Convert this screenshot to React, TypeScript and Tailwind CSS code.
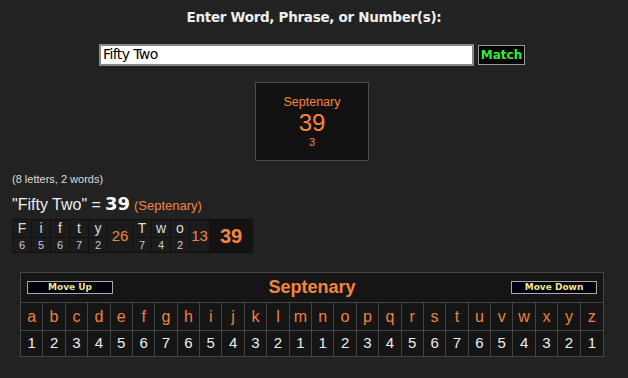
import React from "react";

const letters = "abcdefghijklmnopqrstuvwxyz".split("");
const vals = [1,2,3,4,5,6,7,6,5,4,3,2,1,1,2,3,4,5,6,7,6,5,4,3,2,1];

const word1 = [["F","6"],["i","5"],["f","6"],["t","7"],["y","2"]];
const word2 = [["T","7"],["w","4"],["o","2"]];

export default function App() {
  return (
    <div className="w-[628px] h-[378px] bg-[#222222] overflow-hidden text-white" style={{ fontFamily: '"Liberation Sans", Arial, sans-serif' }}>
      <div className="pt-[9px] h-[44px] text-center font-bold text-[#eeeeee]" style={{ fontFamily: '"DejaVu Sans", Tahoma, sans-serif', fontSize: "13.5px", lineHeight: "16px", letterSpacing: "-0.3px" }}>
        Enter Word, Phrase, or Number(s):
      </div>
      <div className="flex items-center pl-[99px] gap-[4px] h-[21px]">
        <div className="w-[375px] h-[22px] bg-white border-2 border-[#888] flex items-center pl-[2px] text-black" style={{ fontFamily: '"DejaVu Sans", Tahoma, sans-serif', fontSize: "14px", letterSpacing: "-0.6px" }}>
          Fifty Two
        </div>
        <div className="w-[47px] h-[20px] bg-black border border-[#999] flex items-center justify-center text-[#33ee33] font-bold text-[12px]" style={{ fontFamily: '"DejaVu Sans", Tahoma, sans-serif' }}>
          Match
        </div>
      </div>
      <div className="mt-[17px] ml-[255px] w-[114px] h-[79px] bg-[#111111] border border-[#4a4a4a] flex flex-col items-center text-[#f5853f]">
        <div className="mt-[12px] text-[12.5px] leading-[14px]">Septenary</div>
        <div className="mt-[2px] text-[24px] leading-[24px]">39</div>
        <div className="mt-[1px] text-[11px] leading-[12px]">3</div>
      </div>
      <div className="mt-[12px] pl-[12px] text-[11px] leading-[13px] text-[#dddddd]">(8 letters, 2 words)</div>
      <div className="mt-[4px] pl-[12px] flex items-baseline h-[20px]">
        <span className="text-[16px] text-[#eeeeee]">"Fifty Two" = </span>
        <span className="ml-[4px] text-[18px] font-bold text-white" style={{ fontFamily: '"DejaVu Sans", Verdana, sans-serif' }}>39</span>
        <span className="ml-[4px] text-[13px] text-[#f5853f]">(Septenary)</span>
      </div>
      <div className="mt-[9px] ml-[12px] flex w-fit border border-[#111] bg-[#111] gap-px">
        {[word1, word2].map((w, wi) => (
          <React.Fragment key={wi}>
            {w.map(([l, n], i) => (
              <div key={i} className="w-[18px] flex flex-col gap-px">
                <div className="h-[17px] bg-[#1c1c1c] flex items-center justify-center text-[14px] text-[#dddddd]">{l}</div>
                <div className="h-[14px] bg-[#1c1c1c] flex items-center justify-center text-[11px] text-[#cccccc]">{n}</div>
              </div>
            ))}
            <div className={`${wi === 0 ? "w-[24px]" : "w-[19px]"} bg-[#1c1c1c] flex items-center justify-center text-[15px] text-[#f5853f]`}>{wi === 0 ? "26" : "13"}</div>
          </React.Fragment>
        ))}
        <div className="w-[42px] bg-[#131313] flex items-center justify-center text-[20px] font-bold text-[#f5853f]">39</div>
      </div>
      <div className="mt-[19px] ml-[20px] w-[584px] border border-[#444] bg-[#151515]">
        <div className="h-[30px] flex items-center justify-between px-[6px] border-b border-[#444] relative">
          <div className="w-[86px] h-[13px] bg-[#000010] border border-[#aaa] flex items-center justify-center text-[9px] font-bold text-[#f0e68c]" style={{ fontFamily: '"DejaVu Sans", Tahoma, sans-serif' }}>Move Up</div>
          <div className="text-[17px] font-bold text-[#f5853f]" style={{ fontFamily: '"Liberation Sans", Arial, sans-serif', fontSize: "18px" }}>Septenary</div>
          <div className="w-[86px] h-[13px] bg-[#000010] border border-[#aaa] flex items-center justify-center text-[9px] font-bold text-[#f0e68c]" style={{ fontFamily: '"DejaVu Sans", Tahoma, sans-serif' }}>Move Down</div>
        </div>
        <div className="grid grid-cols-[repeat(26,1fr)]">
          {letters.map((l, i) => (
            <div key={l} className={`h-[28px] flex items-center justify-center text-[16px] text-[#f0803c] border-b border-[#444] ${i < 25 ? "border-r" : ""}`}>{l}</div>
          ))}
          {vals.map((v, i) => (
            <div key={i} className={`h-[25px] flex items-center justify-center text-[15px] text-[#eeeeee] border-[#444] ${i < 25 ? "border-r" : ""}`}>{v}</div>
          ))}
        </div>
      </div>
    </div>
  );
}
